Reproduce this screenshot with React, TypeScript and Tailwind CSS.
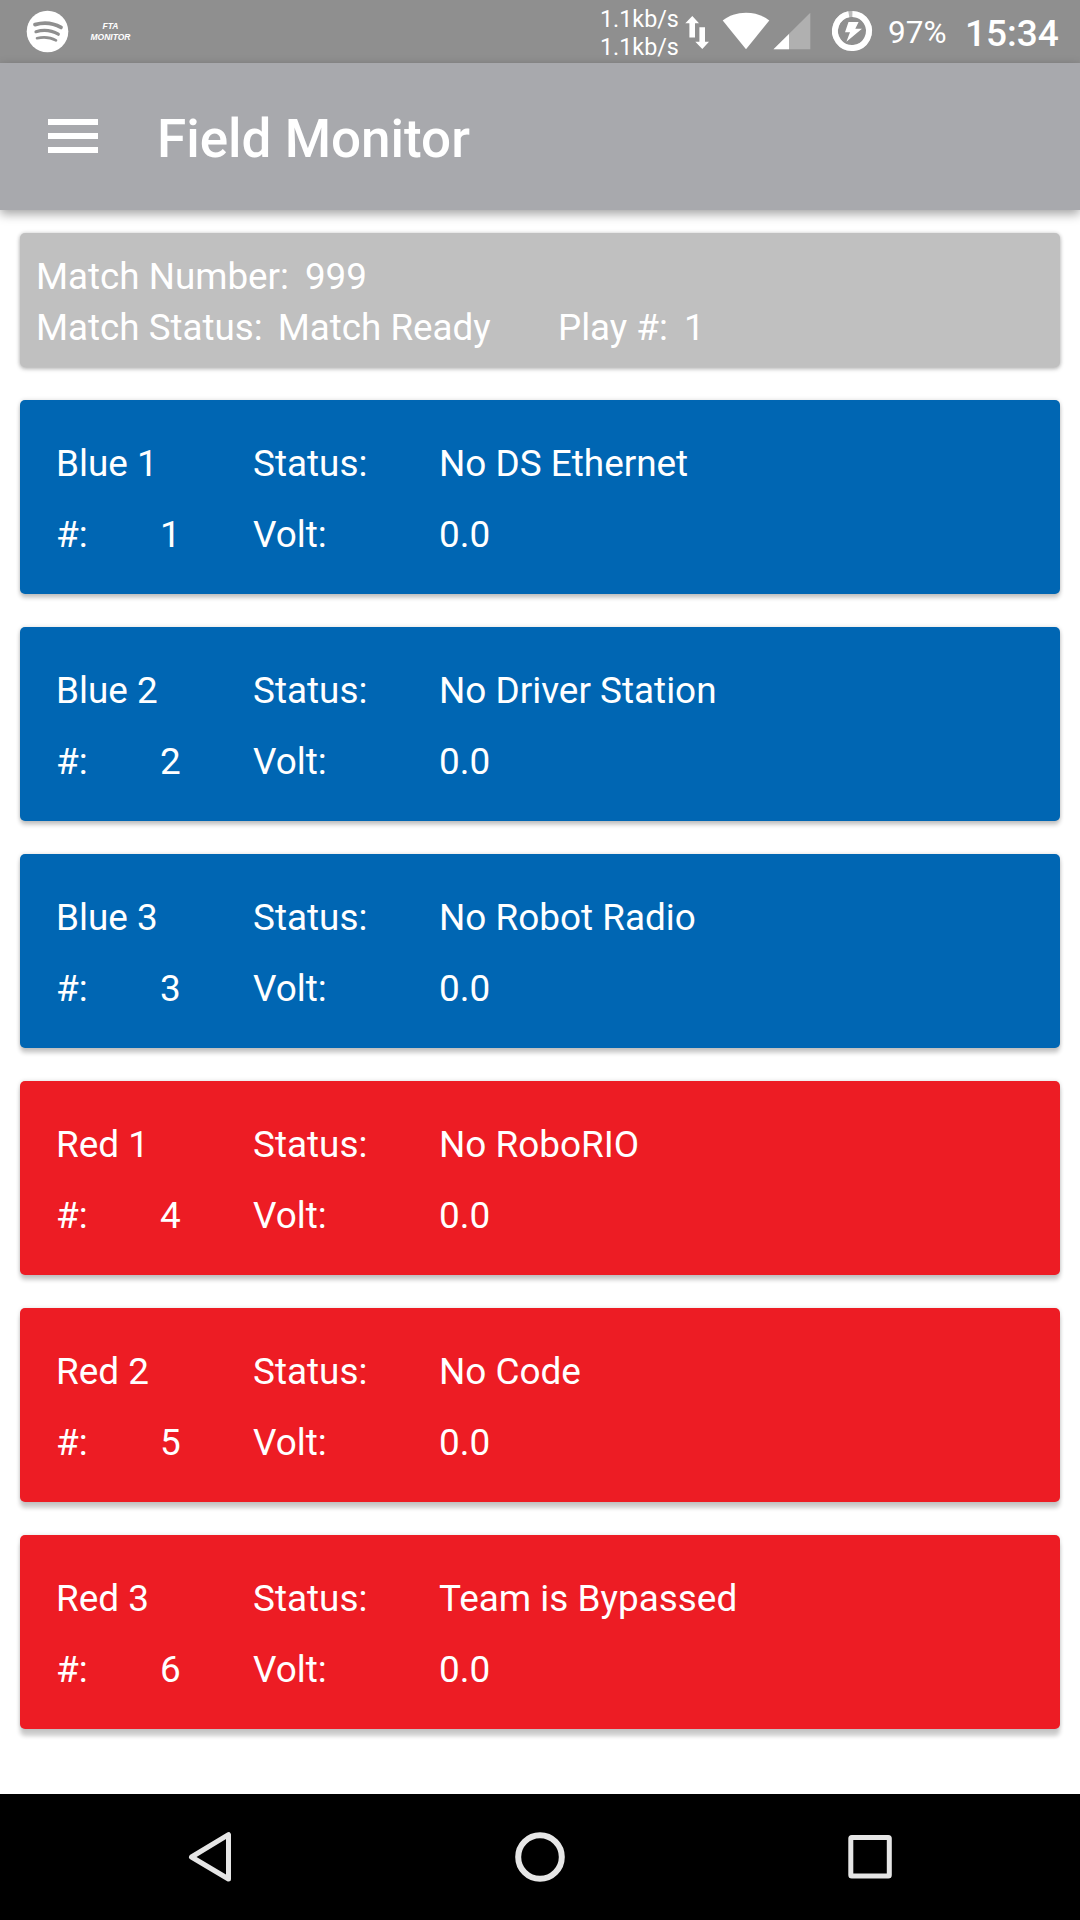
import React from "react";

type Station = {
  name: string;
  team: number;
  status: string;
  volt: string;
  alliance: "blue" | "red";
};

const stations: Station[] = [
  { name: "Blue 1", team: 1, status: "No DS Ethernet", volt: "0.0", alliance: "blue" },
  { name: "Blue 2", team: 2, status: "No Driver Station", volt: "0.0", alliance: "blue" },
  { name: "Blue 3", team: 3, status: "No Robot Radio", volt: "0.0", alliance: "blue" },
  { name: "Red 1", team: 4, status: "No RoboRIO", volt: "0.0", alliance: "red" },
  { name: "Red 2", team: 5, status: "No Code", volt: "0.0", alliance: "red" },
  { name: "Red 3", team: 6, status: "Team is Bypassed", volt: "0.0", alliance: "red" },
];

// Cards further down the screen cast a slightly longer shadow.
const cardShadows = [
  "shadow-[0_4px_4px_rgba(0,0,0,0.2),0_0_4px_rgba(0,0,0,0.15)]",
  "shadow-[0_4px_4px_rgba(0,0,0,0.2),0_0_4px_rgba(0,0,0,0.15)]",
  "shadow-[0_5px_4px_rgba(0,0,0,0.2),0_0_4px_rgba(0,0,0,0.15)]",
  "shadow-[0_5px_4px_rgba(0,0,0,0.2),0_0_4px_rgba(0,0,0,0.15)]",
  "shadow-[0_6px_4px_rgba(0,0,0,0.2),0_0_4px_rgba(0,0,0,0.12)]",
  "shadow-[0_7px_4px_rgba(0,0,0,0.2),0_0_4px_rgba(0,0,0,0.12)]",
];

function StatusBar() {
  return (
    <div className="flex h-[63px] shrink-0 bg-[#8f8f8f] whitespace-nowrap">
      <svg className="h-[63px] w-[85px]" viewBox="0 0 85 63" fill="none">
        <circle cx="47.5" cy="31.5" r="20.8" fill="#fff" />
        <g stroke="#8f8f8f" strokeLinecap="round">
          <path d="M35 24.6C43.5 22.2 53.5 23.2 61 27.4" strokeWidth="3.8" />
          <path d="M36 31.7C43.5 29.6 52 30.6 58.3 34.2" strokeWidth="3.2" />
          <path d="M37 38.2C43.8 36.6 50.5 37.3 56 40.4" strokeWidth="2.6" />
        </g>
      </svg>
      <div className="w-[51px] pt-[21px] text-center font-['Liberation_Sans',sans-serif] text-[8.5px] leading-[11px] font-bold text-white italic">
        <div>FTA</div>
        <div>MONITOR</div>
      </div>
      <div className="ml-auto w-[80px] pt-[5px] text-[23.3px] leading-[28px] text-white">
        <div>1.1kb/s</div>
        <div>1.1kb/s</div>
      </div>
      <svg className="h-[63px] w-[36px]" viewBox="680 0 36 63" fill="#fff">
        <path d="M692.3 16L699 23.3H695V37.5H689.4V23.3H685.3Z" />
        <path d="M702.3 49L695.3 41.7H699.4V27.3H705V41.7H709Z" />
      </svg>
      <svg className="h-[63px] w-[56px]" viewBox="716 0 56 63" fill="#fff">
        <path d="M746 49.3L722.7 20.5C729 15.6 737 12.8 746 12.8C755 12.8 763 15.6 769.3 20.5Z" />
      </svg>
      <svg className="h-[63px] w-[54px]" viewBox="772 0 54 63" fill="#fff">
        <path d="M773.5 49.3L810.3 12.8V49.3Z" fillOpacity=".3" />
        <path d="M773.5 49.3L789 34V49.3Z" />
      </svg>
      <svg className="h-[63px] w-[62px]" viewBox="826 0 62 63">
        <circle cx="852" cy="31" r="17" fill="none" stroke="#fff" strokeOpacity=".4" strokeWidth="6" />
        <path d="M852.4 14A17 17 0 1 1 848.8 14.3" fill="none" stroke="#fff" strokeWidth="6" />
        <path d="M848.5 22H858.6L855.3 28.7H862L846.4 41.8L850 32.3H845Z" fill="#fff" />
      </svg>
      <div className="w-[77px] text-[31.5px] leading-[66px] text-white">97%</div>
      <div className="w-[115px] text-[37px] leading-[67px] font-medium text-white">15:34</div>
    </div>
  );
}

function AppBar() {
  return (
    <header className="z-10 flex h-[147px] shrink-0 items-center bg-[#a8a9ad] pl-[48px] shadow-[0_4px_10px_rgba(0,0,0,0.36)]">
      <div className="-mt-[1px] flex w-[109px] flex-col gap-[8.5px]">
        <div className="h-[5.5px] w-[50px] bg-white" />
        <div className="h-[5.5px] w-[50px] bg-white" />
        <div className="h-[5.5px] w-[50px] bg-white" />
      </div>
      <h1 className="pt-[5px] text-[53px] leading-[62px] font-medium text-white">Field Monitor</h1>
    </header>
  );
}

function StationCard({ s, shadow }: { s: Station; shadow: string }) {
  return (
    <section
      className={
        "grid h-[194px] grid-cols-[104px_93px_186px_1fr] grid-rows-[71px_71px] rounded-[5px] pt-[28px] pl-[36px] leading-[71px] " +
        shadow +
        (s.alliance === "blue" ? " bg-[#0066b3]" : " bg-[#ed1c24]")
      }
    >
      <div className="col-span-2">{s.name}</div>
      <div>Status:</div>
      <div>{s.status}</div>
      <div>#:</div>
      <div>{s.team}</div>
      <div>Volt:</div>
      <div>{s.volt}</div>
    </section>
  );
}

function NavBar() {
  return (
    <nav className="flex h-[126px] shrink-0 items-center justify-between bg-black pr-[187px] pl-[188px]">
      <svg className="h-[52px] w-[44px]" viewBox="188 1831 44 52" fill="none" stroke="#e6e6e6" strokeWidth="5" strokeLinejoin="round">
        <path d="M228.5 1834.7V1879L191.5 1857Z" />
      </svg>
      <svg className="h-[52px] w-[52px]" viewBox="0 0 52 52" fill="none" stroke="#e6e6e6" strokeWidth="6">
        <circle cx="26" cy="26" r="21.8" />
      </svg>
      <svg className="h-[46px] w-[46px]" viewBox="0 0 46 46" fill="none" stroke="#e6e6e6" strokeWidth="5" strokeLinejoin="round">
        <rect x="3.8" y="3.5" width="38.5" height="38.5" rx="1" />
      </svg>
    </nav>
  );
}

export default function App() {
  return (
    <div className="flex h-[1920px] w-[1080px] flex-col overflow-hidden bg-white font-[Roboto,sans-serif]">
      <StatusBar />
      <AppBar />
      <main className="flex grow flex-col gap-[33px] px-[20px] pt-[23px] text-[36.9px] whitespace-nowrap text-white">
        <section className="h-[134px] rounded-[5px] bg-[#c0c0c0] pt-[18px] pl-[16px] text-[36.75px] leading-[51px] shadow-[0_2px_4px_rgba(0,0,0,0.25),0_0_4px_rgba(0,0,0,0.15)]">
          <div className="flex gap-[16px]">
            <span>Match Number:</span>
            <span>999</span>
          </div>
          <div className="flex">
            <div className="flex w-[522px] gap-[15px]">
              <span>Match Status:</span>
              <span>Match Ready</span>
            </div>
            <div className="flex gap-[16px]">
              <span>Play #:</span>
              <span>1</span>
            </div>
          </div>
        </section>
        {stations.map((s, i) => (
          <StationCard key={s.name} s={s} shadow={cardShadows[i]} />
        ))}
      </main>
      <NavBar />
    </div>
  );
}
